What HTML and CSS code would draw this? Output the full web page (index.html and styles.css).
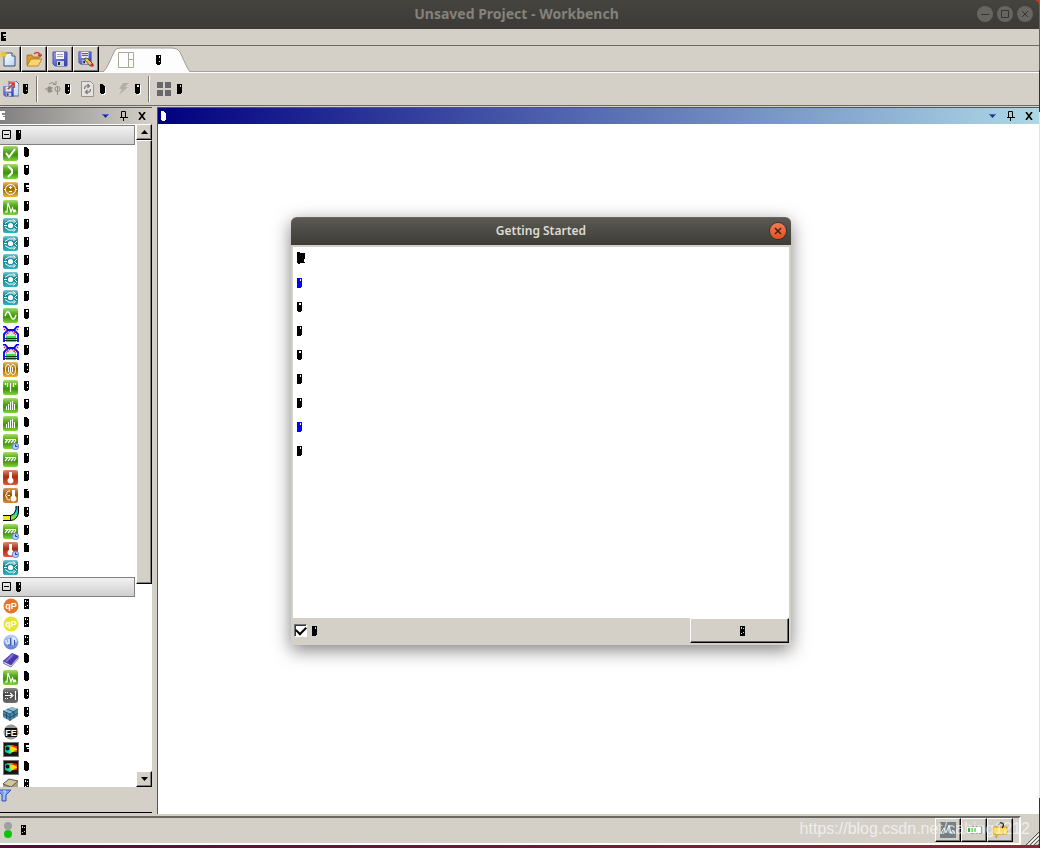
FILE: index.html
```html
<!DOCTYPE html>
<html lang="en">
<head>
<meta charset="utf-8">
<title>Unsaved Project - Workbench</title>
<link rel="stylesheet" href="styles.css">
</head>
<body>
<svg class="defs" aria-hidden="true">
  <defs>
    <linearGradient id="gGreen" x2="0" y2="1"><stop offset="0" stop-color="#a5dd6c"/><stop offset=".35" stop-color="#58ad1e"/><stop offset=".6" stop-color="#3f9208"/><stop offset="1" stop-color="#7dd63a"/></linearGradient>
    <linearGradient id="gTeal" x2="0" y2="1"><stop offset="0" stop-color="#7cc8d2"/><stop offset=".4" stop-color="#0d8392"/><stop offset="1" stop-color="#2cb2c2"/></linearGradient>
    <linearGradient id="gGold" x2="0" y2="1"><stop offset="0" stop-color="#e4bd62"/><stop offset=".45" stop-color="#a06800"/><stop offset="1" stop-color="#eeb02c"/></linearGradient>
    <linearGradient id="gRed" x2="0" y2="1"><stop offset="0" stop-color="#dd8a76"/><stop offset=".45" stop-color="#a92d12"/><stop offset="1" stop-color="#dd5838"/></linearGradient>
    <linearGradient id="gBrown" x2="0" y2="1"><stop offset="0" stop-color="#d69a55"/><stop offset=".45" stop-color="#a05806"/><stop offset="1" stop-color="#d98526"/></linearGradient>
    <linearGradient id="gDark" x2="0" y2="1"><stop offset="0" stop-color="#8b8b8b"/><stop offset=".45" stop-color="#404040"/><stop offset="1" stop-color="#707070"/></linearGradient>
    <linearGradient id="gBlue" x2="1" y2="1"><stop offset="0" stop-color="#9aa2ec"/><stop offset="1" stop-color="#2b35a8"/></linearGradient>
    <linearGradient id="gPage" x2="1" y2="1"><stop offset="0" stop-color="#fff"/><stop offset="1" stop-color="#b9d4f2"/></linearGradient>
    <linearGradient id="gHeat"><stop offset="0" stop-color="#16c832"/><stop offset=".35" stop-color="#0bd8e0"/><stop offset=".6" stop-color="#f4f000"/><stop offset="1" stop-color="#f02000"/></linearGradient>
    <linearGradient id="gTube" x2="0" y2="1"><stop offset="0" stop-color="#0a8cc8"/><stop offset=".4" stop-color="#10d8dc"/><stop offset=".7" stop-color="#5ee23c"/><stop offset="1" stop-color="#f2e800"/></linearGradient>
    <linearGradient id="gSky" x2="0" y2="1"><stop offset="0" stop-color="#c4d2f4"/><stop offset="1" stop-color="#5b7ed0"/></linearGradient>
  </defs>
  <symbol id="check" viewBox="0 0 16 16"><rect width="15" height="15" rx="2" fill="url(#gGreen)"/><path d="M3 7l3 4 6-8" fill="none" stroke="#fff" stroke-width="2"/></symbol>
  <symbol id="chev" viewBox="0 0 16 16"><rect width="15" height="15" rx="2" fill="url(#gGreen)"/><path d="M5 2l4 4v3l-4 4" fill="none" stroke="#fff" stroke-width="2"/></symbol>
  <symbol id="elec" viewBox="0 0 16 16"><rect width="15" height="15" rx="2" fill="url(#gGold)"/><circle cx="7.500" cy="7.500" r="5" fill="none" stroke="#fff"/><path d="M6 5.500h3M7.500 4v3M6 9.500h3M1 7.500h2M12 7.500h2" stroke="#fff"/></symbol>
  <symbol id="pulse" viewBox="0 0 16 16"><rect width="15" height="15" rx="2" fill="url(#gGreen)"/><path d="M2 12h2l1-9 3 9 1.500-4 1.500 4 1-2 1 2" fill="none" stroke="#fff" stroke-width="1.200"/></symbol>
  <symbol id="flow" viewBox="0 0 16 16"><rect width="15" height="15" rx="2" fill="url(#gTeal)"/><circle cx="7.500" cy="7.500" r="2.600" fill="#fff"/><path d="M1 7.500h3M2 5.500q3.500-4 9-2.500M2 9.500q3.500 4 9 2.500M10.500 1.500l2 2-2 1M10.500 13.500l2-2-2-1M14 5l-2.500 2.500L14 10" fill="none" stroke="#fff"/></symbol>
  <symbol id="sine" viewBox="0 0 16 16"><rect width="15" height="15" rx="2" fill="url(#gGreen)"/><path d="M2 8q2.500-8 5.500-.5T13 7" fill="none" stroke="#fff" stroke-width="1.500"/></symbol>
  <symbol id="engine" viewBox="0 0 16 16"><path d="M3 9l3-4h4l3 4v1H3z" fill="#e2e2e6"/><path d="M3 10h10v6H3z" fill="#34e04e"/><path d="M0 .5h2l3 3.500h6l3-3.500h2M5 4L1 8v8M11 4l4 4v8" fill="none" stroke="#00f" stroke-width="1.800"/><path d="M1 3l4 4M15 3l-4 4M7 5L3 9M9 5l4 4" stroke="#e01818" stroke-width="1.500" stroke-dasharray="1.400 1"/><path d="M2 12.500h12M2 14.500h12" stroke="#063c14"/></symbol>
  <symbol id="magnet" viewBox="0 0 16 16"><rect width="15" height="15" rx="2" fill="url(#gGold)"/><g fill="none" stroke="#fff"><ellipse cx="5" cy="7.500" rx="2.500" ry="5"/><ellipse cx="10" cy="7.500" rx="2.500" ry="5"/><path d="M5.500 5v5M9.500 5v5"/></g></symbol>
  <symbol id="modal" viewBox="0 0 16 16"><rect width="15" height="15" rx="2" fill="url(#gGreen)"/><path d="M7.500 3v9M2.500 3v2M4.500 3v4M10.500 3v4M12.500 3v2" stroke="#fff" stroke-width="1.200"/></symbol>
  <symbol id="bars" viewBox="0 0 16 16"><rect width="15" height="15" rx="2" fill="url(#gGreen)"/><path d="M3.500 8v4M5.500 6v6M7.500 4v8M9.500 3v9M11.500 6v6" stroke="#fff"/></symbol>
  <symbol id="static" viewBox="0 0 16 16"><rect width="15" height="15" rx="2" fill="url(#gGreen)"/><path d="M2 5.500h11M2 9l2.500-3M5 9l2.500-3M8 9l2.500-3M11 9l2-3" stroke="#fff" stroke-width="1.200"/></symbol>
  <symbol id="clock" viewBox="0 0 16 16"><circle cx="12.500" cy="12.500" r="3.200" fill="#b8ccfa" stroke="#6685dc"/><path d="M12.500 10.500v2h2" fill="none" stroke="#25399d"/></symbol>
  <symbol id="thermo" viewBox="0 0 16 16"><rect width="15" height="15" rx="2" fill="url(#gRed)"/><path d="M6 2h3v6a3 3 0 1 1-3 0z" fill="#fff"/></symbol>
  <symbol id="thermoelec" viewBox="0 0 16 16"><rect width="15" height="15" rx="2" fill="url(#gBrown)"/><path d="M9 2h3v6a3 3 0 1 1-3 0z" fill="#fff"/><path d="M7 3q-4 0-3 3l-2 1.500 2 1.500q-1 3 3 3M4.500 7.500H7" fill="none" stroke="#fff"/></symbol>
  <symbol id="tube" viewBox="0 0 16 16"><path d="M0 9h8q5-2 5-9h3v6q-1 8-8 9H0z" fill="url(#gTube)"/><path d="M0 10h7v5H0z" fill="#f0e820"/><path d="M0 9.500h8q4-1 5-6V0M15.500 0v6q-1 8-8 8.500H0M7.500 9v6" fill="none" stroke="#000"/></symbol>
  <symbol id="swirl" viewBox="0 0 16 16"><circle cx="8" cy="8" r="7.500" fill="url(#gSky)"/><path d="M3 6q0 4 3 4V5M13 8q0-4-3-4v7" fill="none" stroke="#e6edff" stroke-width="1.500"/><path d="M7.500 4v7H5M11.500 6v5" fill="none" stroke="#3559b8"/></symbol>
  <symbol id="book" viewBox="0 0 16 16"><path d="M0 9l9-8 7 3-8 10z" fill="#4938b0"/><path d="M2 9l7-7 2 1-7 7z" fill="#8277da"/><path d="M0 9l8 4 7-8v2l-7 8-8-4z" fill="#eee" stroke="#443492" stroke-width=".7"/></symbol>
  <symbol id="wall" viewBox="0 0 16 16"><rect width="15" height="15" rx="3" fill="url(#gDark)"/><path d="M2 7.500h7M7 5l3 2.500L7 10M12.500 3v9" fill="none" stroke="#fff" stroke-width="1.200"/><path d="M2 4.500h4M2 10.500h4" stroke="#fff" stroke-dasharray="1 1"/></symbol>
  <symbol id="mesh" viewBox="0 0 16 16"><path d="M0 5l9-4 6 2v7l-8 5-7-4z" fill="#4d8aac"/><path d="M0 5l9-4 6 2-8 5z" fill="#8dbbd4"/><path d="M0 5l7 3 8-5M7 8v7M3.500 6.500V13M11 5.500V12M0 8l7 3.500L15 7M4 3l7 3" fill="none" stroke="#16455f" stroke-width=".8"/></symbol>
  <symbol id="contour" viewBox="0 0 16 16"><path d="M0 0h16v15H0z" fill="#777"/><path d="M1 1h14v13H1z" fill="#171717"/><path d="M2 4l3-1 9 1v6q-5-1-7 2l-5-2z" fill="url(#gHeat)"/><path d="M6 6l5-1 3 2v1l-5 1z" fill="#f8e400"/><path d="M7 4l7 0v2z" fill="#f02800"/><circle cx="4.500" cy="6.500" r="2" fill="#08142a"/></symbol>
  <symbol id="crate" viewBox="0 0 16 16"><path d="M0 6l6-5 9 2v7l-7 5-8-4z" fill="#a99f79"/><path d="M0 6l6-5 9 2-7 6z" fill="#cec6a4"/><path d="M0 6l6-5 9 2M0 6l8 3 7-6M8 9v6" fill="none" stroke="#665e3e"/></symbol>
  <symbol id="m1" viewBox="0 0 5 10"><path fill-rule="evenodd" d="M0 0h3v1h1v1h1v7H4v1H1V9H0z"/></symbol>
  <symbol id="m2" viewBox="0 0 5 10"><path fill-rule="evenodd" d="M0 0h5v9H4v1H1V9H0zM2 1v2h2V1z"/></symbol>
  <symbol id="m3" viewBox="0 0 5 10"><path fill-rule="evenodd" d="M0 0h5v2H2v2h3v1H3v1h2v3H0z"/></symbol>
  <symbol id="m4" viewBox="0 0 5 10"><path fill-rule="evenodd" d="M0 0h5v9H4v1H0zM3 1v2h1V1z"/></symbol>
  <symbol id="m5" viewBox="0 0 5 10"><path fill-rule="evenodd" d="M0 0h5v9H4v1H1V9H0zM3 1v2h1V1zM3 6v1h1V6z"/></symbol>
  <symbol id="m6" viewBox="0 0 5 10"><path fill-rule="evenodd" d="M0 0h4v1H3v1h2v7H0z"/></symbol>
  <symbol id="m7" viewBox="0 0 5 10"><path fill-rule="evenodd" d="M0 0h5v10H0zM1 1v2h1V1zM3 2v1h1V2zM1 7v1h1V7zM3 6v1h1V6z"/></symbol>
  <symbol id="pin" viewBox="0 0 8 10"><path d="M1.500 6V.5h4V6M0 6.500h8M3.500 7v3" fill="none" stroke="#000"/><path d="M5 1h1v5H5z"/></symbol>
  <symbol id="close" viewBox="0 0 8 8"><path d="M1 0l6 8M7 0L1 8" stroke="#000" stroke-width="1.600"/></symbol>
  <symbol id="drop" viewBox="0 0 8 5"><path d="M0 0h7L3.500 4z" fill="#1c2f80"/><path d="M0 .5h7" stroke="#4c66c4"/></symbol>
  <symbol id="floppy" viewBox="0 0 16 16"><path d="M1 1h14v14H3l-2-2z" fill="url(#gBlue)" stroke="#4a50a8"/><path d="M4 1h8v7H4z" fill="#f4f6ff"/><path d="M5 3.500h6M5 5.500h6" stroke="#aaa"/><path d="M5 10h7v5H5z" fill="#ccd2e6"/><path d="M6 11h2v3H6z" fill="#222"/></symbol>
</svg>

<header class="titlebar">
  <h1>Unsaved Project - Workbench</h1>
  <div class="winbtns">
    <button aria-label="Minimize"><svg viewBox="0 0 16 16"><path d="M4 8.500h8"/></svg></button>
    <button aria-label="Maximize"><svg viewBox="0 0 16 16"><path d="M4.500 4.500h7v7h-7z"/></svg></button>
    <button aria-label="Close window"><svg viewBox="0 0 16 16"><path d="M5 5l6 6M11 5l-6 6"/></svg></button>
  </div>
</header>

<nav class="menubar"><button aria-label="File"><svg class="mark"><use href="#m3"/></svg></button></nav>

<div class="tabs">
  <button class="tool first" aria-label="New"><svg viewBox="0 0 16 16"><path d="M4 2h8l3 3v10H4z" fill="url(#gPage)" stroke="#39517a"/><path d="M12 2v3h3" fill="#fff" stroke="#39517a"/><path d="M3 0v7M0 3.500h7M1 1l5 5M6 1L1 6" stroke="#f1c232" stroke-width="1.300"/></svg></button>
  <button class="tool" aria-label="Open"><svg viewBox="0 0 16 16"><path d="M1 4h5l1 2h6v3H5l-3 5H1z" fill="#d99d28" stroke="#98650d" stroke-width=".7"/><path d="M5 8h11l-4 7H1z" fill="#ffd36d" stroke="#a16f14" stroke-width=".7"/><path d="M8 3q3-3 6 0v2M12 3.500l2 2 2-2" fill="none" stroke="#d03a30" stroke-width="1.300"/></svg></button>
  <button class="tool" aria-label="Save"><svg><use href="#floppy"/></svg></button>
  <button class="tool" aria-label="Save as"><svg viewBox="0 0 16 16"><use href="#floppy" width="14" height="14"/><path d="M4 2.500h6M4 4.500h6" stroke="#16934a"/><path d="M7 7l2 0 6 6-1 2-2 0-5-6z" fill="#f0bf46" stroke="#333" stroke-width=".7"/><path d="M12 14l2-2 2 2-1 2z" fill="#bf3636"/></svg></button>
  <button class="tab" aria-label="Project">
    <svg class="tabshape" viewBox="0 0 88 25" preserveAspectRatio="none"><path d="M0 25Q3 23 6 16T12 3Q14 1 18 1H69Q75 1 77 5Q81 14 84 20T88 25z" fill="#fdfdfd"/><path d="M0 25Q3 23 6 16T12 3Q14 1 18 1H69Q75 1 77 5Q81 14 84 20T88 25" fill="none" stroke="#a09e98"/></svg>
    <svg class="layout" viewBox="0 0 16 16"><path d="M.5 .5h15v15H.5zM10.500 0v16M10 7.500h6" fill="none" stroke="#aaa698"/></svg>
    <svg class="mark"><use href="#m5"/></svg>
  </button>
</div>

<div class="toolbar">
  <button aria-label="Import"><svg class="ico" viewBox="0 0 16 16"><path d="M6 0h7l3 3v12H6z" fill="url(#gPage)" stroke="#526a90"/><use href="#floppy" y="5" width="11" height="11"/><path d="M5 8l5-5M6 2h5v5" fill="none" stroke="#ce3527" stroke-width="1.700"/></svg><svg class="mark"><use href="#m5"/></svg></button>
  <span class="sep"></span>
  <button aria-label="Reconnect"><svg class="ico" viewBox="0 0 16 16"><path d="M0 8h3M3 6h3v5H3zM6 7h2M6 10h2" fill="#908e88" stroke="#908e88"/><circle cx="12.500" cy="8" r="2.500" fill="none" stroke="#908e88"/><path d="M12.500 5v9M4 3q3-3 6 0M8 3.500h3V0" fill="none" stroke="#908e88"/></svg><svg class="mark halo"><use href="#m5"/></svg></button>
  <button aria-label="Refresh project"><svg class="ico" viewBox="0 0 16 16"><path d="M1.500 .5h9l3 3v12h-12z" fill="#e5e3df" stroke="#96948c"/><path d="M4.500 8q0-4 4-3M7.500 3l2 2-2 2M10.500 8q0 4-4 3M7.500 9l-2 2 2 2" fill="none" stroke="#7e7c76" stroke-width="1.300"/></svg><svg class="mark halo"><use href="#m1"/></svg></button>
  <button aria-label="Update project"><svg class="ico" viewBox="0 0 16 16"><path d="M8 2h6l-4 4h3L4 14l3-6H4z" fill="#b2afa9"/></svg><svg class="mark halo"><use href="#m2"/></svg></button>
  <span class="sep"></span>
  <button aria-label="Start page"><svg class="ico" viewBox="0 0 16 16"><path d="M0 1h6v6H0zM8 1h6v6H8zM0 9h6v6H0zM8 9h6v6H8z" fill="#66686a"/></svg><svg class="mark"><use href="#m4"/></svg></button>
</div>

<main class="panes">
  <aside class="toolbox">
    <div class="panehead">
      <svg class="mark light"><use href="#m3"/></svg>
      <div class="paneicons"><button aria-label="Menu"><svg class="drop"><use href="#drop"/></svg></button><button aria-label="Pin"><svg class="pin"><use href="#pin"/></svg></button><button aria-label="Close toolbox"><svg class="close"><use href="#close"/></svg></button></div>
    </div>
    <div class="scroller">
      <div class="list">
        <button class="group" aria-label="Analysis Systems"><svg class="minus" viewBox="0 0 9 9"><path d="M.5 .5h8v8h-8zM2 4.500h5" fill="none" stroke="#000"/></svg><svg class="mark"><use href="#m4"/></svg></button>
        <ul>
          <li><svg class="ico"><use href="#check"/></svg><svg class="mark"><use href="#m1"/></svg></li>
          <li><svg class="ico"><use href="#chev"/></svg><svg class="mark"><use href="#m2"/></svg></li>
          <li><svg class="ico"><use href="#elec"/></svg><svg class="mark"><use href="#m3"/></svg></li>
          <li><svg class="ico"><use href="#pulse"/></svg><svg class="mark"><use href="#m4"/></svg></li>
          <li><svg class="ico"><use href="#flow"/></svg><svg class="mark"><use href="#m4"/></svg></li>
          <li><svg class="ico"><use href="#flow"/></svg><svg class="mark"><use href="#m4"/></svg></li>
          <li><svg class="ico"><use href="#flow"/></svg><svg class="mark"><use href="#m4"/></svg></li>
          <li><svg class="ico"><use href="#flow"/></svg><svg class="mark"><use href="#m4"/></svg></li>
          <li><svg class="ico"><use href="#flow"/></svg><svg class="mark"><use href="#m4"/></svg></li>
          <li><svg class="ico"><use href="#sine"/></svg><svg class="mark"><use href="#m2"/></svg></li>
          <li><svg class="ico"><use href="#engine"/></svg><svg class="mark"><use href="#m4"/></svg></li>
          <li><svg class="ico"><use href="#engine"/></svg><svg class="mark"><use href="#m4"/></svg></li>
          <li><svg class="ico"><use href="#magnet"/></svg><svg class="mark"><use href="#m5"/></svg></li>
          <li><svg class="ico"><use href="#modal"/></svg><svg class="mark"><use href="#m5"/></svg></li>
          <li><svg class="ico"><use href="#bars"/></svg><svg class="mark"><use href="#m2"/></svg></li>
          <li><svg class="ico"><use href="#bars"/></svg><svg class="mark"><use href="#m1"/></svg></li>
          <li><svg class="ico"><use href="#static"/><use href="#clock"/></svg><svg class="mark"><use href="#m4"/></svg></li>
          <li><svg class="ico"><use href="#static"/></svg><svg class="mark"><use href="#m4"/></svg></li>
          <li><svg class="ico"><use href="#thermo"/></svg><svg class="mark"><use href="#m4"/></svg></li>
          <li><svg class="ico"><use href="#thermoelec"/></svg><svg class="mark"><use href="#m6"/></svg></li>
          <li><svg class="ico"><use href="#tube"/></svg><svg class="mark"><use href="#m5"/></svg></li>
          <li><svg class="ico"><use href="#static"/><use href="#clock"/></svg><svg class="mark"><use href="#m4"/></svg></li>
          <li><svg class="ico"><use href="#thermo"/><use href="#clock"/></svg><svg class="mark"><use href="#m6"/></svg></li>
          <li><svg class="ico"><use href="#flow"/></svg><svg class="mark"><use href="#m4"/></svg></li>
        </ul>
        <button class="group" aria-label="Component Systems"><svg class="minus" viewBox="0 0 9 9"><path d="M.5 .5h8v8h-8zM2 4.500h5" fill="none" stroke="#000"/></svg><svg class="mark"><use href="#m5"/></svg></button>
        <ul>
          <li><svg class="ico" viewBox="0 0 16 16"><circle cx="8" cy="8" r="7.500" fill="#e7742b"/><text x="8" y="11" class="badge">qP</text></svg><svg class="mark"><use href="#m7"/></svg></li>
          <li><svg class="ico" viewBox="0 0 16 16"><circle cx="8" cy="8" r="7.500" fill="#e5e52a"/><text x="8" y="11" class="badge">qP</text></svg><svg class="mark"><use href="#m7"/></svg></li>
          <li><svg class="ico"><use href="#swirl"/></svg><svg class="mark"><use href="#m7"/></svg></li>
          <li><svg class="ico"><use href="#book"/></svg><svg class="mark"><use href="#m1"/></svg></li>
          <li><svg class="ico"><use href="#pulse"/></svg><svg class="mark"><use href="#m1"/></svg></li>
          <li><svg class="ico"><use href="#wall"/></svg><svg class="mark"><use href="#m5"/></svg></li>
          <li><svg class="ico"><use href="#mesh"/></svg><svg class="mark"><use href="#m5"/></svg></li>
          <li><svg class="ico" viewBox="0 0 16 16"><circle cx="8" cy="8" r="7.500" fill="#999"/><path d="M2 4h12v9H2z" fill="#111"/><text x="8" y="12" class="badge">FE</text></svg><svg class="mark"><use href="#m5"/></svg></li>
          <li><svg class="ico"><use href="#contour"/></svg><svg class="mark"><use href="#m3"/></svg></li>
          <li><svg class="ico"><use href="#contour"/></svg><svg class="mark"><use href="#m1"/></svg></li>
          <li><svg class="ico"><use href="#crate"/></svg><svg class="mark"><use href="#m7"/></svg></li>
        </ul>
      </div>
      <div class="scrollbar">
        <button class="arrow" aria-label="Scroll up"><svg viewBox="0 0 7 4"><path d="M0 4l3.500-4L7 4z"/></svg></button>
        <div class="thumb"></div>
        <div class="track"></div>
        <button class="arrow" aria-label="Scroll down"><svg viewBox="0 0 7 4"><path d="M0 0h7L3.500 4z"/></svg></button>
      </div>
    </div>
    <div class="filter"><button aria-label="Filter"><svg viewBox="0 0 12 13"><path d="M0 1h11L6 6v6H2V6L-2 1z" fill="#7da2f1" stroke="#3058ba"/><path d="M3 2h3L4 6v5" fill="none" stroke="#c9dbff"/></svg></button></div>
  </aside>

  <section class="workspace">
    <div class="panehead active">
      <svg class="mark light"><use href="#m1"/></svg>
      <div class="paneicons"><button aria-label="Menu"><svg class="drop"><use href="#drop"/></svg></button><button aria-label="Pin"><svg class="pin"><use href="#pin"/></svg></button><button aria-label="Close schematic"><svg class="close"><use href="#close"/></svg></button></div>
    </div>
  </section>
</main>

<footer class="status">
  <div class="statusline">
    <svg class="lamp" viewBox="0 0 8 16"><circle cx="4" cy="4" r="4" fill="#a0a0a0"/><circle cx="4" cy="12" r="4" fill="#08c40c"/></svg>
    <svg class="mark"><use href="#m7"/></svg>
    <div class="statusbtns">
      <button class="tool" aria-label="Job monitor"><svg viewBox="0 0 16 16"><path d="M0 0h16v16H0z" fill="#738087"/><path d="M1 11l3-5 2 5 3-8 2 8 2-3 2 4" fill="none" stroke="#eee"/></svg></button>
      <button class="tool" aria-label="Show progress"><svg viewBox="0 0 16 16"><path d="M.5 4.500h15v7H.5z" fill="#fff" stroke="#999"/><path d="M2 6h2v4H2zM5 6h2v4H5zM8 6h2v4H8z" fill="#1ac92e"/></svg></button>
      <button class="tool" aria-label="Show messages"><svg viewBox="0 0 16 16"><path d="M1 5h14v7H6l-2 4v-4H1z" fill="#ffdf62" stroke="#ce9815"/><path d="M7 3q0-3 3-2t0 5" fill="none" stroke="#222" stroke-width="1.300"/></svg></button>
    </div>
  </div>
  <svg class="grip" viewBox="0 0 13 13"><path d="M0 13L13 0M4 13l9-9M8 13l5-5M12 13l1-1" stroke="#555"/><path d="M1 14L14 1M5 14l9-9" stroke="#fff"/></svg>
  <span class="watermark">https://blog.csdn.net/cabing1212</span>
</footer>
<div class="desktop"></div>

<section class="dialog" role="dialog" aria-labelledby="dlg">
  <header><h2 id="dlg">Getting Started</h2><button aria-label="Close"><svg viewBox="0 0 16 16"><path d="M5 5l6 6M11 5l-6 6"/></svg></button></header>
  <div class="message">
    <svg class="heading" viewBox="0 0 8 12"><path d="M0 0h3v1h5v6H7v3h1v1H3v1H1v-1H0z"/></svg>
    <a href="#more" aria-label="More information"><svg class="mark"><use href="#m4"/></svg></a>
    <svg class="mark"><use href="#m2"/></svg>
    <svg class="mark"><use href="#m4"/></svg>
    <svg class="mark"><use href="#m2"/></svg>
    <svg class="mark"><use href="#m4"/></svg>
    <svg class="mark"><use href="#m4"/></svg>
    <a href="#help" aria-label="Help"><svg class="mark"><use href="#m4"/></svg></a>
    <svg class="mark"><use href="#m4"/></svg>
  </div>
  <div class="actions">
    <input type="checkbox" id="show" checked>
    <label for="show" aria-label="Show at startup"><svg class="mark"><use href="#m4"/></svg></label>
    <button class="ok" aria-label="OK"><svg class="mark"><use href="#m7"/></svg></button>
  </div>
</section>
</body>
</html>
```

FILE: styles.css
```css
* { box-sizing: border-box; }
body {
  margin: 0;
  height: 100vh;
  padding-right: 1px;
  display: flex;
  flex-direction: column;
  overflow: hidden;
  font-family: "Noto Sans", "Open Sans", sans-serif;
  background: linear-gradient(#c8400f 0 70px, #333 70px 112px, #e4e2e4 112px 798px, #74112e 798px);
}
button { margin: 0; padding: 0; border: 0; background: none; display: flex; align-items: center; }
svg { display: block; flex: none; }
h1, h2, ul { margin: 0; padding: 0; }
.defs { position: absolute; width: 0; height: 0; }
.badge { font: bold 9px "Liberation Sans", sans-serif; text-anchor: middle; fill: #fff; }
.mark { width: 5px; height: 10px; fill: #000; shape-rendering: crispEdges; }
.light { fill: #fff; }
.halo { filter: drop-shadow(1px 1px 0 #fff); }
.ico { width: 16px; height: 16px; }

.titlebar {
  flex: none;
  height: 29px;
  display: grid;
  grid-template-columns: 1fr auto 1fr;
  align-items: center;
  padding: 0 6px 1px 0;
  background: linear-gradient(#45443f, #3b3a36);
  border-radius: 0 5px 0 0;
}
.titlebar h1 { grid-column: 2; font-size: 14px; font-weight: 700; line-height: 26px; color: #84827b; }
.winbtns { display: flex; justify-content: flex-end; gap: 4px; }
.winbtns button { width: 16px; height: 16px; border-radius: 50%; background: #67655f; }
.winbtns svg { width: 16px; height: 16px; fill: none; stroke: #34332f; }

.menubar { flex: none; height: 17px; padding: 3px 0 0 1px; background: #d4d0c8; border-bottom: 1px solid #6b6963; }

.tabs { flex: none; height: 27px; display: flex; background: #d4d0c8; border-bottom: 1px solid #fff; box-shadow: inset 0 -1px #a5a29b; }
.tool {
  width: 26px;
  height: 26px;
  justify-content: center;
  background: #d4d0c8;
  border: 1px solid;
  border-color: #fff #000 #000 #fff;
  box-shadow: inset -1px -1px #77746e;
}
.tool svg { width: 16px; height: 16px; }
.tool.first { width: 21px; padding-right: 4px; border-left: 0; }
.tab { position: relative; width: 88px; height: 25px; margin: 1px 0 0 4px; padding-left: 15px; gap: 22px; }
.tabshape { position: absolute; inset: 0; width: 100%; height: 100%; }
.tab .layout { position: relative; width: 16px; height: 16px; }
.tab .mark { position: relative; }

.toolbar { flex: none; height: 33px; display: flex; align-items: center; padding-left: 3px; background: #d4d0c8; border-bottom: 1px solid #6b6963; }
.toolbar button { gap: 4px; margin-right: 8px; }
.toolbar button:has(+ button) { margin-right: 10px; }
.sep { width: 2px; height: 26px; margin-right: 7px; background: linear-gradient(90deg, #77746e 50%, #fff 50%); }

.panes { flex: 1; min-height: 0; display: flex; border-top: 1px solid #d4d0c8; background: #d4d0c8; }
.toolbox { flex: none; width: 152px; display: flex; flex-direction: column; border-top: 1px solid #555; margin-bottom: 1px; }
.panehead { flex: none; height: 16px; display: flex; align-items: center; justify-content: space-between; padding-right: 6px; background: linear-gradient(90deg, #808080, #d4d0c8); }
.panehead.active { padding-left: 3px; background: linear-gradient(90deg, #00007f, #add8e6); }
.paneicons { display: flex; align-items: center; gap: 10px; }
.drop { width: 8px; height: 5px; }
.pin { width: 8px; height: 10px; }
.close { width: 8px; height: 8px; }

.scroller { flex: 1; min-height: 0; display: flex; background: #fff; }
.list { flex: 1; min-width: 0; padding-top: 1px; overflow: hidden; }
.group { width: 135px; height: 20px; gap: 5px; padding: 0 0 1px 2px; background: linear-gradient(#f2f2f2, #cfcfcf); border: 1px solid #808080; border-left: 0; }
.minus { width: 9px; height: 9px; }
li { height: 18px; display: flex; gap: 5px; padding: 1px 0 0 3px; list-style: none; }
li .mark { margin-top: 1px; }
.scrollbar { flex: none; width: 16px; display: flex; flex-direction: column; background: #d4d0c8; }
.arrow { height: 16px; justify-content: center; background: #d4d0c8; border: 1px solid; border-color: #fff #000 #000 #fff; box-shadow: inset -1px -1px #808080; }
.arrow svg { width: 7px; height: 4px; }
.thumb { flex: 443; background: #d4d0c8; border: 1px solid; border-color: #fff #000 #000 #fff; box-shadow: inset -1px -1px #808080; }
.track { flex: 188; background: #fff; }
.filter { flex: none; height: 26px; padding-top: 2px; border-bottom: 1px solid #000; }
.filter svg { width: 12px; height: 13px; }

.workspace { flex: 1; margin-left: 5px; border-left: 1px solid #555; border-top: 1px solid #555; background: #fff; }

.status { flex: none; position: relative; height: 31px; display: flex; align-items: stretch; padding-top: 2px; background: #d4d0c8; }
.statusline { flex: 1; display: flex; align-items: center; padding: 0 0 2px 4px; border-top: 2px solid #6b6963; border-bottom: 2px solid #fff; border-right: 2px solid #fff; }
.lamp { width: 8px; height: 16px; margin-right: 9px; }
.statusbtns { display: flex; align-self: flex-start; margin-left: auto; margin-right: 6px; }
.statusbtns .tool { height: 24px; }
.grip { width: 13px; height: 13px; margin-left: 5px; align-self: flex-end; }
.watermark { position: absolute; right: 9px; top: 5px; font: 16px/20px "Liberation Sans", sans-serif; color: rgba(255, 255, 255, .65); }
.desktop { flex: none; height: 3px; background: linear-gradient(90deg, #5c0638, #9b1f32); }

.dialog {
  position: absolute;
  left: 291px;
  top: 217px;
  width: 500px;
  background: #d4d0c8;
  border-radius: 6px 6px 0 0;
  box-shadow: 0 5px 18px rgba(0, 0, 0, .5);
}
.dialog header { height: 28px; display: grid; grid-template-columns: 1fr auto 1fr; align-items: center; padding: 0 5px 2px; border-radius: 6px 6px 0 0; background: linear-gradient(#5b5952, #3d3c37); border-top: 1px solid #6a675e; }
.dialog h2 { grid-column: 2; font-size: 12px; font-weight: 600; line-height: 24px; color: #dfdbd2; }
.dialog header button { justify-self: end; width: 16px; height: 16px; border-radius: 50%; background: linear-gradient(#f37b54, #e4501f); box-shadow: 0 0 0 1px #35332e; }
.dialog header svg { width: 16px; height: 16px; fill: none; stroke: #432014; stroke-width: 1.500; }
.message { height: 371px; margin: 2px 2px 0; padding: 5px 4px; display: flex; flex-direction: column; gap: 14px; background: #fff; }
.heading { width: 8px; height: 12px; }
.message a .mark { fill: #00f; }
.actions { display: flex; align-items: center; padding: 0 2px 2px 3px; }
.actions input { appearance: none; width: 13px; height: 13px; margin: 0 5px 0 0; border: 1px solid; border-color: #777 #fff #fff #777; background: #fff; box-shadow: inset 1px 1px #333; display: grid; place-items: center; }
.actions input:checked::before { content: ""; width: 8px; height: 5px; margin-bottom: 2px; border: solid #000; border-width: 0 0 2px 2px; rotate: -45deg; }
.ok { width: 99px; height: 25px; margin-left: auto; justify-content: center; border: 1px solid; border-color: #fff #000 #000 #fff; box-shadow: inset -1px -1px #666; padding-left: 5px; }
```
